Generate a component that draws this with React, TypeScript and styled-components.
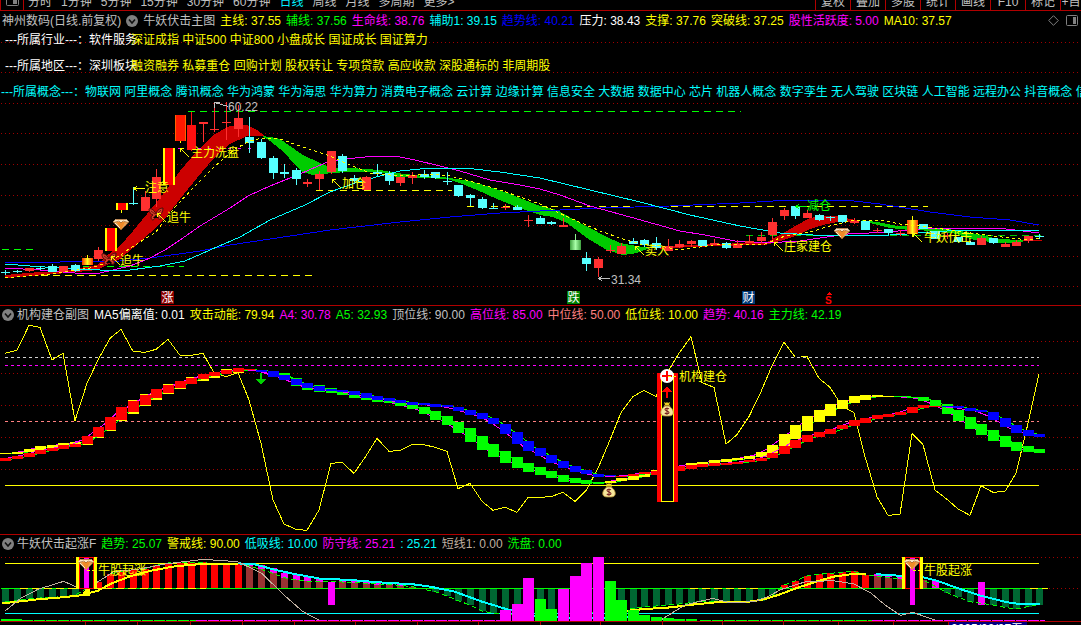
import React from "react";
import styled, { createGlobalStyle } from "styled-components";

const GlobalStyle = createGlobalStyle`
  * { box-sizing: border-box; }
  body {
    margin: 0;
    background: #000;
    color: #c0c0c0;
    font: 12px/16px "Liberation Sans", "Noto Sans CJK SC", sans-serif;
  }
`;

const RULE = "#b00000";

const Page = styled.main`
  display: flex;
  flex-direction: column;
  min-height: 100vh;
  overflow: hidden;
  background: #000;
`;

const Toolbar = styled.nav`
  display: flex;
  align-items: flex-end;
  height: 11px;
  overflow: hidden;
  border-bottom: 1px solid ${RULE};
  border-left: 1px solid ${RULE};
`;

const LayoutButton = styled.button`
  display: flex;
  align-items: flex-end;
  justify-content: center;
  width: 23px;
  height: 16px;
  padding: 0 0 4px;
  border: 0;
  border-right: 1px solid ${RULE};
  background: #000;
`;

const Periods = styled.div`
  display: flex;
  gap: 9px;
  padding-left: 4px;
`;

const PeriodButton = styled.button<{ $active?: boolean }>`
  padding: 0;
  border: 0;
  background: none;
  font: inherit;
  white-space: nowrap;
  color: ${(p) => (p.$active ? "#00f0ff" : "#c0c0c0")};
`;

const Tools = styled.div`
  display: flex;
  margin-left: auto;
`;

const ToolButton = styled.button<{ $last?: boolean }>`
  width: ${(p) => (p.$last ? 21 : 35)}px;
  padding: 0;
  border: 0;
  border-left: 1px solid ${RULE};
  background: none;
  color: #c0c0c0;
  font: inherit;
  white-space: nowrap;
`;

const Panel = styled.section<{ $ruled?: boolean }>`
  border-top: ${(p) => (p.$ruled ? `1px solid ${RULE}` : "0")};
`;

const Header = styled.header<{ $tall?: boolean }>`
  display: flex;
  align-items: center;
  gap: 5px;
  height: ${(p) => (p.$tall ? 18 : 16)}px;
  padding: ${(p) => (p.$tall ? 1 : 2)}px 3px 0 2px;
  white-space: nowrap;
`;

const Title = styled.h2<{ $wide?: boolean }>`
  display: flex;
  align-items: center;
  gap: ${(p) => (p.$wide ? 5 : 3)}px;
  margin: 0;
  font: inherit;
  color: #c0c0c0;
`;

const Collapse = styled.button`
  display: flex;
  padding: 0;
  border: 0;
  background: none;
`;

const Reading = styled.span<{ $color: string }>`
  color: ${(p) => p.$color};
`;

const HeaderTools = styled.div`
  display: flex;
  align-items: center;
  gap: 7px;
  margin-left: auto;
`;

const IconButton = styled.button`
  display: flex;
  padding: 0;
  border: 0;
  background: none;
`;

const Stack = styled.div`
  display: grid;
  overflow: hidden;
  > * {
    grid-area: 1 / 1;
    min-width: 0;
  }
`;

const Chart = styled.svg`
  display: block;
  width: 100%;
  height: auto;
  shape-rendering: crispEdges;
  text {
    font: 12px "Liberation Sans", "Noto Sans CJK SC", sans-serif;
  }
`;

const Notes = styled.div`
  display: flex;
  flex-direction: column;
  gap: 6px;
  padding-top: 1px;
`;

const Note = styled.p<{ $indent: number; $color: string }>`
  display: flex;
  margin: 0;
  padding-left: ${(p) => p.$indent}px;
  line-height: 20px;
  white-space: nowrap;
  color: ${(p) => p.$color};
`;

const NoteLead = styled.span`
  width: 126px;
  flex: none;
`;

const NoteLinks = styled.span`
  color: #ffff00;
`;

/* ---------- shared chart helpers ---------- */

const W = 1081;
const barX = (i: number) => Math.round(5.3 + 11.62 * i);

type Pt = [number, number];
const pts = (list: Pt[]) => list.map((p) => p.join(",")).join(" ");

const Dotted = ({ ys }: { ys: number[] }) => (
  <>
    {ys.map((y) => (
      <path key={y} d={`M1 ${y}.5H${W}`} stroke="#a00000" strokeDasharray="1 3" />
    ))}
  </>
);

const HDash = ({ y, x1, x2, color, dash = "7 5" }: { y: number; x1: number; x2: number; color: string; dash?: string }) => (
  <path d={`M${x1} ${y}.5H${x2}`} stroke={color} strokeDasharray={dash} />
);

const Line = ({ p, c, w = 1, dash }: { p: Pt[]; c: string; w?: number; dash?: string }) => (
  <polyline points={pts(p)} fill="none" stroke={c} strokeWidth={w} strokeDasharray={dash} />
);

const Pointer = ({ x, y, color = "#ffff00" }: { x: number; y: number; color?: string }) => (
  <path d={`M${x} ${y}l9 9M${x} ${y}h4M${x} ${y}v4`} stroke={color} fill="none" />
);

const LeftArrow = ({ x, y, color, len = 11 }: { x: number; y: number; color: string; len?: number }) => (
  <path d={`M${x} ${y}.5h${len}M${x + 3} ${y - 2}l-3 2.5l3 2.5`} stroke={color} fill="none" />
);

const Gem = ({ x, y }: { x: number; y: number }) => (
  <g transform={`translate(${x} ${y})`} shapeRendering="geometricPrecision">
    <path d="M-5-5H5L8-2L0 6L-8-2Z" fill="#e9a356" />
    <path d="M-5-5H5L8-2H-8Z" fill="#ffe8c4" />
    <path d="M-4-2H4L0 6Z" fill="#f08a28" />
    <path d="M-5-4.5H5M-7-1.5L-2-3L0-1L2-3L7-1.5" stroke="#a86a32" strokeWidth=".8" fill="none" />
    <path d="M-6-1L-1 4" stroke="#fff3dc" strokeWidth=".9" />
  </g>
);

const Butterfly = ({ x, y }: { x: number; y: number }) => (
  <g transform={`translate(${x} ${y})`} shapeRendering="geometricPrecision">
    <path d="M0 0C-2-5-6-6-7-5C-7-1-5 0-3 1C-6 2-5 6-3 6C-1 5 0 3 0 1C1 4 3 6 5 5C6 2 4 1 3 1C6 0 7-3 7-6C4-6 1-4 0 0Z" fill="#d03a28" stroke="#4a0d08" />
    <path d="M-5-3L-1 0M5-4L1 0M-3 4L0 1L3 4" stroke="#5a1008" strokeWidth=".8" />
  </g>
);

const MoneyBag = ({ x, y }: { x: number; y: number }) => (
  <g transform={`translate(${x} ${y})`} shapeRendering="geometricPrecision">
    <path d="M-3-8L-1-7L0-8L1-7L3-8L2-5H-2Z" fill="#e8d020" />
    <path d="M-2-4H2C5-2 7 1 6 4C5 6 3 6 0 6S-5 6-6 4C-7 1-5-2-2-4Z" fill="#f6e69a" stroke="#b08a30" strokeWidth=".8" />
    <path d="M-3-4.5H3" stroke="#a08020" />
    <path d="M2-1.2C1-2-2-2-2-.4S2 .8 2 2.5S-1 4-2.2 3M0-2.6V4.8" stroke="#7a2222" strokeWidth="1.1" fill="none" />
  </g>
);

const Tag = ({ x, y, bg, children }: { x: number; y: number; bg: string; children: string }) => (
  <g>
    <rect x={x} y={y} width="13" height="13" fill={bg} />
    <text x={x + 0.5} y={y + 11} fill="#fff">{children}</text>
  </g>
);

/* ---------- panel 1: candles ---------- */

// kind, body top, body bottom, wick top, wick bottom
type Candle = [string, number, number, number, number];
const CANDLES: Candle[] = [
  ["c", 272, 273, 270, 275], ["c", 271, 272, 270, 273], ["r", 268, 271, 268, 272], ["c", 268, 269, 266, 270],
  ["c", 266, 272, 264, 272], ["r", 266, 272, 266, 272], ["c", 265, 271, 264, 272], ["o", 258, 265, 255, 265],
  ["r", 250, 259, 247, 261], ["y", 228, 251, 228, 251], ["y", 203, 210, 203, 213], ["c", 203, 204, 187, 205],
  ["r", 197, 211, 191, 211], ["r", 177, 199, 169, 207], ["y", 148, 185, 148, 185], ["h", 115, 141, 115, 143],
  ["r", 125, 150, 112, 151], ["r", 122, 124, 122, 142], ["r", 129, 130, 102, 132], ["r", 122, 123, 102, 140],
  ["r", 118, 129, 105, 137], ["c", 137, 143, 117, 153], ["c", 142, 158, 139, 159], ["c", 158, 173, 156, 179],
  ["c", 172, 174, 164, 178], ["c", 170, 179, 168, 185], ["r", 182, 184, 179, 187], ["r", 174, 179, 171, 190],
  ["r", 151, 172, 151, 174], ["c", 156, 171, 154, 173], ["c", 178, 181, 175, 184], ["r", 177, 190, 176, 190],
  ["c", 172, 174, 164, 176], ["c", 173, 181, 171, 185], ["r", 177, 183, 174, 186], ["r", 175, 178, 172, 184],
  ["c", 174, 177, 170, 179], ["c", 172, 178, 172, 179], ["c", 181, 182, 172, 185], ["c", 185, 196, 185, 197],
  ["c", 195, 198, 194, 206], ["c", 199, 208, 197, 209], ["c", 208, 209, 203, 209], ["r", 207, 208, 204, 210],
  ["c", 207, 210, 205, 210], ["r", 220, 221, 215, 227], ["c", 218, 224, 216, 224], ["c", 222, 224, 221, 225],
  ["r", 225, 227, 218, 227], ["g", 240, 250, 234, 250], ["c", 258, 264, 252, 271], ["r", 259, 268, 257, 277],
  ["r", 250, 251, 245, 253], ["r", 246, 254, 243, 254], ["c", 241, 244, 238, 244], ["c", 240, 245, 239, 247],
  ["c", 243, 248, 237, 250], ["r", 246, 251, 239, 251], ["r", 244, 247, 240, 248], ["r", 241, 244, 240, 247],
  ["c", 240, 246, 240, 246], ["r", 243, 245, 239, 245], ["c", 243, 248, 242, 249], ["r", 244, 248, 240, 248],
  ["r", 241, 243, 235, 243], ["r", 237, 241, 232, 243], ["r", 222, 235, 218, 239], ["r", 210, 216, 208, 220],
  ["c", 206, 216, 206, 219], ["r", 213, 218, 210, 218], ["c", 215, 220, 214, 221], ["c", 217, 218, 216, 221],
  ["c", 215, 222, 215, 223], ["r", 221, 223, 218, 224], ["c", 221, 230, 221, 230], ["r", 230, 231, 228, 233],
  ["c", 229, 233, 229, 235], ["r", 233, 234, 230, 236], ["m", 220, 234, 216, 237], ["c", 224, 229, 224, 229],
  ["c", 231, 239, 231, 239], ["r", 235, 236, 233, 239], ["c", 237, 242, 237, 243], ["c", 242, 245, 241, 245],
  ["r", 238, 245, 236, 245], ["c", 238, 243, 238, 244], ["r", 244, 247, 242, 247], ["r", 242, 246, 240, 246],
  ["r", 236, 241, 236, 243], ["c", 236, 237, 234, 239],
];

const Candles = () => (
  <>
    {CANDLES.map(([k, t, b, hi, lo], i) => {
      const x = barX(i);
      const wide = k === "y" || k === "o" || k === "h" || k === "m" || k === "g";
      const color = k === "c" ? "#55ffff" : k === "g" ? "#8df08d" : k === "r" ? (i === 16 ? "#ff1010" : "#ff3030") : "#ffff00";
      const fill: Record<string, string> = { y: "#ff0000", o: "url(#amber)", h: "#ff1800", m: "url(#amber)", g: "url(#mint)" };
      return (
        <g key={i}>
          <rect x={x} y={hi} width="1" height={lo - hi} fill={color} />
          {wide ? (
            <rect x={x - 5} y={t} width="11" height={b - t} fill={fill[k]} />
          ) : (
            <rect x={x - 4} y={t} width="9" height={b - t} fill={color} />
          )}
          {(k === "y" || k === "h") && (
            <path d={`M${x - 4.5} ${t}V${b}M${x + 5.5} ${t}V${b}`} stroke={k === "y" ? "#ffff00" : "#ff6000"} strokeWidth={k === "y" ? 2 : 1} />
          )}
        </g>
      );
    })}
  </>
);

const RED_RISE: Pt[] = [[5, 275], [40, 272], [70, 270], [97, 265], [109, 254], [120, 246], [133, 231], [147, 214], [160, 198], [180, 171], [197, 151], [213, 135], [230, 126], [247, 125], [257, 130], [265, 136], [247, 136], [230, 144], [213, 159], [197, 178], [180, 199], [167, 216], [150, 233], [133, 248], [120, 259], [109, 264], [97, 270], [67, 273], [33, 276], [5, 278]];
const GREEN_FALL: Pt[] = [[262, 136], [270, 137], [280, 139], [290, 146], [303, 155], [320, 163], [333, 168], [350, 168], [380, 170], [397, 173], [423, 176], [443, 177], [470, 181], [490, 187], [510, 194], [540, 206], [557, 210], [573, 219], [590, 228], [607, 237], [620, 243], [637, 246], [650, 248], [637, 253], [623, 255], [607, 250], [587, 238], [567, 223], [553, 217], [540, 215], [517, 207], [497, 199], [477, 190], [460, 183], [447, 179], [423, 178], [397, 177], [380, 172], [347, 172], [333, 173], [313, 175], [303, 172], [293, 163], [285, 153], [270, 141]];
const RED_SECOND: Pt[] = [[660, 247], [690, 245], [720, 244], [767, 242], [780, 235], [797, 225], [810, 218], [823, 216], [840, 216], [850, 219], [862, 221], [837, 222], [823, 225], [810, 229], [793, 237], [780, 241], [765, 245], [720, 246], [690, 247], [660, 249]];
const GREEN_LAST: Pt[] = [[860, 220], [877, 222], [897, 226], [917, 227], [943, 228], [960, 231], [983, 235], [997, 239], [1023, 240], [1023, 242], [1003, 243], [990, 242], [970, 239], [957, 234], [937, 231], [910, 230], [890, 228], [870, 223]];
const MAGENTA_MA: Pt[] = [[5, 268], [40, 270], [75, 273], [100, 273], [130, 266], [150, 258], [165, 250], [180, 240], [200, 226], [230, 208], [248, 196], [270, 186], [300, 174], [325, 163], [345, 159], [375, 156], [395, 156], [415, 160], [440, 166], [460, 171], [490, 180], [520, 185], [540, 189], [560, 195], [590, 206], [630, 217], [680, 231], [705, 235], [735, 241], [765, 243], [800, 241], [820, 238], [848, 234], [890, 232], [907, 230], [933, 228], [998, 228], [1023, 231], [1039, 233]];
const CYAN_MA: Pt[] = [[5, 264], [30, 266], [60, 268], [100, 270], [130, 270], [160, 266], [185, 261], [210, 250], [240, 237], [270, 220], [305, 205], [330, 192], [355, 183], [380, 176], [400, 171], [430, 168], [465, 168], [500, 172], [540, 178], [590, 190], [640, 202], [690, 215], [740, 226], [780, 233], [830, 236], [890, 235], [907, 234], [930, 232], [965, 230], [1039, 230]];
const BLUE_MA: Pt[] = [[5, 262], [60, 262], [120, 261], [150, 258], [200, 251], [230, 245], [270, 239], [330, 230], [400, 222], [450, 217], [500, 213], [540, 211], [600, 208], [670, 206], [740, 203], [790, 200], [845, 200], [880, 204], [930, 212], [970, 217], [1010, 220], [1039, 225]];
const YELLOW_MA: Pt[] = [[5, 278], [50, 274], [90, 268], [110, 262], [135, 245], [155, 233], [175, 207], [195, 186], [215, 166], [235, 149], [250, 141], [262, 138], [280, 139], [300, 146], [330, 156], [350, 165], [370, 173], [400, 176], [430, 174], [450, 176], [470, 181], [500, 190], [540, 204], [570, 218], [600, 231], [620, 238], [640, 244], [660, 246], [680, 250], [700, 247], [720, 244], [765, 244], [785, 236], [810, 232], [830, 226], [850, 221], [880, 220], [900, 224], [920, 226], [950, 230], [985, 235], [1010, 238], [1030, 240], [1039, 238]];

const MainChart = () => (
  <Chart viewBox="0 29 1081 276" role="img" aria-label="牛妖伏击主图">
    <defs>
      <linearGradient id="amber">
        <stop offset="0" stopColor="#ff3000" />
        <stop offset=".5" stopColor="#ffff20" />
        <stop offset="1" stopColor="#ff3000" />
      </linearGradient>
      <linearGradient id="mint">
        <stop offset="0" stopColor="#3ea03e" />
        <stop offset=".5" stopColor="#a8ffa8" />
        <stop offset="1" stopColor="#3ea03e" />
      </linearGradient>
    </defs>
    <Dotted ys={[42, 72, 103, 133, 164, 195, 225, 256, 286]} />
    <HDash y={111} x1={188} x2={741} color="#00ff00" />
    <HDash y={249} x1={2} x2={33} color="#00ff00" />
    <HDash y={266} x1={83} x2={184} color="#00ff00" />
    <HDash y={235} x1={746} x2={1043} color="#00c800" />
    <HDash y={275} x1={5} x2={312} color="#ffff00" />
    <HDash y={190} x1={316} x2={452} color="#ffff00" />
    <HDash y={206} x1={467} x2={928} color="#ffff00" />
    <polygon points={pts(RED_RISE)} fill="#cc0000" />
    <polygon points={pts(GREEN_FALL)} fill="#00cc00" />
    <polygon points={pts(RED_SECOND)} fill="#cc0000" />
    <polygon points={pts(GREEN_LAST)} fill="#00cc00" />
    <path d="M1023 240.5H1042" stroke="#cc0000" />
    <HDash y={148} x1={178} x2={252} color="#ff00ff" dash="3 7" />
    <Line p={BLUE_MA} c="#0000ff" />
    <Line p={MAGENTA_MA} c="#ff00ff" />
    <Line p={CYAN_MA} c="#00ffff" />
    <Candles />
    <Line p={YELLOW_MA} c="#ffff00" dash="3 3" />
    <Butterfly x={156} y={214} />
    <Butterfly x={109} y={259} />
    <Gem x={121} y={224} />
    <Gem x={842} y={233} />

    <LeftArrow x={134} y={188} color="#ffff00" />
    <text x="145" y="192" fill="#ffff00">注意</text>
    <Pointer x={180} y={148} />
    <text x="191" y="157" fill="#ffff00">主力洗盘</text>
    <Pointer x={157} y={213} />
    <text x="167" y="222" fill="#ffff00">追牛</text>
    <Pointer x={111} y={256} />
    <text x="120" y="265" fill="#ffff00">追牛</text>
    <Pointer x={332} y={179} />
    <text x="342" y="188" fill="#ffff00">加仓</text>
    <path d="M214.5 102.5l14 4M214.5 102.5h5M214.5 102.5v5" stroke="#c0c0c0" fill="none" />
    <text x="228" y="111" fill="#c0c0c0">60.22</text>
    <LeftArrow x={599} y={278} color="#c0c0c0" />
    <text x="611" y="284" fill="#c0c0c0">31.34</text>
    <Pointer x={635} y={246} />
    <text x="645" y="255" fill="#ffff00">卖入</text>
    <Pointer x={774} y={242} />
    <text x="784" y="251" fill="#ffff00">庄家建仓</text>
    <LeftArrow x={796} y={206} color="#00ff00" />
    <text x="807" y="210" fill="#00ff00">减仓</text>
    <Pointer x={913} y={233} />
    <text x="924" y="242" fill="#ffff00">牛妖伏击</text>

    <Tag x={161} y={291} bg="#8b0000">涨</Tag>
    <Tag x={567} y={291} bg="#008000">跌</Tag>
    <Tag x={742} y={291} bg="#003a78">财</Tag>
    <path d="M826 295L829 292L832 295Z" fill="#ff0000" />
    <text x="825" y="304" fill="#ff0000" style={{ fontSize: 10, fontWeight: 700 }}>S</text>
  </Chart>
);

/* ---------- panel 2: block bands ---------- */

const unit = (v: number) => 300 + v / 3;

const OSC = [160, 151, 76, 82, 180, 160, 362, 250, 180, 115, 88, 154, 157, 148, 118, 166, 166, 160, 218, 230, 218, 300, 430, 600, 672, 688, 691, 630, 490, 487, 520, 468, 415, 454, 451, 434, 434, 442, 454, 566, 550, 604, 631, 622, 637, 592, 592, 590, 577, 604, 572, 505, 420, 338, 290, 271, 290, 215, 160, 110, 248, 262, 432, 404, 350, 275, 197, 127, 170, 170, 235, 262, 318, 338, 470, 590, 646, 643, 401, 434, 570, 598, 627, 646, 557, 577, 574, 520, 370, 222];

type Span = [number, number];
// Slow band: red while rising, blue while falling.
const SLOW: Span[] = [
  [474, 482], [468, 476], [458, 471], [450, 461], [444, 453], [436, 447], [431, 440], [409, 432], [382, 413], [352, 390],
  [322, 360], [302, 335], [284, 313], [267, 295], [254, 278], [243, 263], [233, 250], [223, 238], [216, 229], [209, 222],
  [204, 217], [208, 211], [209, 214], [214, 231], [224, 240], [237, 255], [250, 265], [258, 272], [267, 274], [270, 276],
  [273, 285], [279, 293], [289, 300], [295, 303], [300, 309], [305, 314], [309, 316], [312, 320], [316, 323], [320, 333],
  [330, 344], [338, 357], [353, 371], [371, 402], [395, 430], [424, 454], [445, 470], [465, 488], [484, 504], [497, 515],
  [511, 524], [522, 530], [526, 530], [527, 531], [522, 528], [517, 524], [512, 524], [506, 516], [498, 512], [494, 507],
  [492, 501], [489, 497], [488, 494], [485, 491], [481, 488], [474, 483], [460, 474], [437, 461], [419, 443], [404, 426],
  [396, 410], [388, 402], [376, 389], [360, 377], [354, 369], [346, 357], [342, 350], [336, 345], [321, 338], [316, 326],
  [318, 321], [319, 322], [319, 325], [324, 333], [331, 336], [336, 360], [354, 381], [376, 399], [390, 408], [402, 412],
];
// Fast band: yellow while rising, green while falling.
const FAST: Span[] = [
  [460, 464], [457, 462], [448, 458], [438, 450], [436, 446], [430, 438], [427, 433], [408, 434], [380, 414], [350, 392],
  [320, 362], [300, 342], [282, 317], [266, 299], [253, 282], [242, 267], [232, 254], [222, 242], [215, 233], [208, 223],
  [204, 219], [207, 212], [209, 214], [212, 228], [220, 236], [233, 258], [248, 270], [256, 277], [264, 278], [272, 284],
  [276, 293], [284, 300], [290, 305], [299, 309], [304, 318], [313, 327], [320, 342], [333, 360], [347, 375], [366, 398],
  [384, 425], [407, 449], [432, 471], [453, 489], [471, 504], [488, 516], [501, 525], [513, 535], [524, 544], [535, 549],
  [541, 552], [545, 550], [544, 550], [535, 545], [528, 540], [519, 532], [511, 524], [504, 514], [497, 505], [490, 499],
  [486, 495], [480, 491], [478, 486], [475, 482], [468, 476], [457, 471], [436, 459], [402, 438], [375, 418], [348, 392],
  [330, 366], [311, 347], [300, 326], [289, 311], [285, 300], [286, 293], [288, 291], [289, 292], [290, 293], [291, 302],
  [299, 320], [312, 342], [329, 362], [350, 387], [371, 405], [390, 422], [407, 440], [426, 453], [439, 457], [447, 459],
];

const slowColor = (i: number) => (i < 22 || (i > 52 && i < 81) ? "#ff0000" : "#0000ff");
const fastColor = (i: number) => (i < 22 || (i > 51 && i < 77) ? "#ffff00" : "#00ff00");

const Band = ({ data, color }: { data: Span[]; color: (i: number) => string }) => {
  const trail = (dx: number): Pt[] => data.map(([t, b], i) => [barX(i) + dx, unit((t + b) / 2)]);
  return (
    <>
      <Line p={trail(-5)} c="#ff00ff" />
      <Line p={trail(5)} c="#00ff00" />
      {data.map(([t, b], i) => (
        <rect key={i} x={barX(i) - 5} y={Math.round(unit(t))} width="11" height={Math.max(1, Math.round((b - t) / 3))} fill={color(i)} />
      ))}
    </>
  );
};

const BandChart = () => (
  <Chart viewBox="0 322 1081 212" role="img" aria-label="机构建仓副图">
    <Dotted ys={[341, 373, 405, 437, 469]} />
    <HDash y={357} x1={5} x2={1039} color="#d0d0d0" dash="3 3" />
    <HDash y={365} x1={5} x2={1039} color="#ff00ff" dash="3 3" />
    <HDash y={421} x1={5} x2={1039} color="#ff8080" dash="3 3" />
    <path d="M5 485.5H1039" stroke="#ffff00" />
    <Line p={OSC.slice(0, 69).map((v, i): Pt => [barX(i), unit(v)])} c="#ffff00" />
    <Line p={OSC.slice(69).map((v, i): Pt => [barX(i + 69), unit(v)])} c="#ffff00" />
    <path d="M801 356.5H808" stroke="#ffff00" />
    <Band data={FAST} color={fastColor} />
    <Band data={SLOW} color={slowColor} />

    <rect x="657" y="373" width="21" height="129" fill="#ff0000" />
    <rect x="661.5" y="373.5" width="12" height="128" fill="#000" stroke="#ffff00" />
    <circle cx="667" cy="376" r="7" fill="#fff" shapeRendering="geometricPrecision" />
    <path d="M662 376H672M667 371V381" stroke="#ff0000" strokeWidth="2" />
    <path d="M667 386L672 392H662ZM666 392H668V398H666Z" fill="#ff0000" />
    <MoneyBag x={667} y={410} />
    <MoneyBag x={609} y={491} />
    <path d="M261 385L256 379H266ZM260 373H262V380H260Z" fill="#00d000" />
    <path d="M668 376.5H678" stroke="#ffff00" strokeDasharray="3 2" />
    <text x="679" y="381" fill="#ffff00">机构建仓</text>
  </Chart>
);

/* ---------- panel 3: histogram ---------- */

const lo = (v: number) => 530 + v / 3;
const ZERO = 588;

// bar index, colour key, edge of the bar away from the zero line
const HIST: [number, string, number][] = [
  [0, "g", 216], [1, "g", 212], [2, "g", 206], [3, "g", 204], [4, "g", 202], [5, "g", 200], [6, "g", 196],
  [8, "r", 155], [9, "r", 133], [10, "r", 124], [11, "r", 120], [12, "r", 116], [13, "r", 106], [14, "r", 99],
  [15, "r", 98], [16, "r", 97], [17, "r", 97], [18, "r", 103], [19, "r", 103], [20, "r", 101],
  [21, "b", 108], [22, "b", 118], [23, "b", 130], [24, "b", 143], [25, "b", 150], [26, "b", 154], [27, "b", 155],
  [29, "b", 156], [30, "b", 158], [31, "b", 160], [32, "b", 162], [33, "b", 163], [34, "b", 166], [35, "b", 170],
  [37, "g", 185], [38, "g", 198], [39, "g", 212], [40, "g", 225], [41, "g", 243], [42, "g", 250], [43, "g", 252],
  [44, "g", 256], [45, "g", 258], [46, "g", 258], [47, "g", 256], [53, "g", 240], [54, "g", 236], [55, "g", 230],
  [56, "g", 228], [57, "g", 225], [58, "g", 222], [59, "g", 218], [60, "g", 214], [61, "g", 216], [62, "g", 216],
  [63, "g", 216], [64, "g", 215], [65, "g", 212], [66, "g", 196], [67, "r", 165], [68, "r", 153], [69, "r", 138],
  [70, "r", 133], [71, "r", 130], [72, "r", 127], [73, "r", 124], [74, "r", 135], [75, "b", 138], [76, "b", 143],
  [77, "b", 147], [79, "b", 150], [81, "g", 188], [82, "g", 202], [83, "g", 215], [85, "g", 225], [86, "g", 232],
  [87, "g", 237], [88, "g", 230], [89, "g", 224],
];
const HIST_COLORS: Record<string, string> = { g: "#006633", r: "#ff0000", b: "#993333" };

// bar index, top, bottom
const CAPS: [number, number, number][] = [
  [21, 100, 108], [22, 106, 118], [23, 115, 130], [24, 128, 143], [25, 136, 150], [26, 142, 154], [27, 147, 155],
  [28, 155, 224], [29, 150, 156], [30, 153, 158], [31, 156, 161], [32, 158, 163], [33, 160, 165], [34, 163, 168],
  [75, 132, 138], [76, 136, 143], [77, 138, 147], [80, 150, 173], [84, 156, 224],
];

// bar index, colour, top
const VOLUME: [number, string, number][] = [
  [43, "#ff00ff", 240], [44, "#ff00ff", 222], [45, "#ff00ff", 144], [46, "#00ff00", 207], [47, "#00ff00", 237],
  [48, "#ff00ff", 177], [49, "#ff00ff", 137], [50, "#ff00ff", 100], [51, "#ff00ff", 82], [52, "#00ff00", 153],
  [53, "#00ff00", 210], [54, "#00ff00", 240], [55, "#00ff00", 255], [56, "#00ff00", 261], [57, "#00ff00", 263],
  [58, "#00ff00", 267], [59, "#00ff00", 267],
];

const scaleLeft = (list: Pt[]): Pt[] => list.map(([x, y]) => [x / 2.904, lo(y)]);
const scaleRight = (list: Pt[]): Pt[] => list.map(([x, y]) => [540 + x / 2.898, lo(y)]);

const YELLOW_A = scaleLeft([[6, 220], [60, 214], [110, 208], [180, 202], [235, 196], [285, 182], [320, 162], [380, 138], [440, 122], [500, 110], [560, 104], [620, 101], [690, 101]]);
const YELLOW_B = scaleRight([[200, 254], [270, 240], [320, 236], [380, 232], [440, 224], [510, 217], [600, 216], [650, 208], [690, 195], [750, 172], [800, 155], [850, 140], [900, 133], [945, 133]]);
const CYAN_A = scaleLeft([[690, 100], [740, 103], [800, 120], [860, 133], [930, 146], [1020, 150], [1100, 157], [1200, 163], [1250, 170], [1320, 185], [1400, 215], [1470, 237], [1560, 260], [1700, 264], [1850, 262]]);
const CYAN_B = scaleRight([[975, 133], [1000, 134], [1050, 138], [1110, 142], [1150, 152], [1220, 178], [1280, 198], [1350, 216], [1390, 222], [1448, 222]]);
const BEIGE_A = scaleLeft([[16, 242], [60, 205], [110, 178], [185, 154], [220, 170], [250, 178], [285, 155], [330, 125], [400, 118], [480, 102], [590, 88], [690, 95], [760, 130], [830, 200], [880, 245], [925, 270]]);
const BEIGE_B = scaleRight([[350, 270], [420, 225], [500, 205], [550, 218], [620, 215], [660, 200], [700, 178], [770, 155], [850, 152], [910, 162], [960, 190], [1000, 225], [1045, 256], [1080, 247], [1145, 270]]);
const TREND: Pt[] = HIST.map(([i, , v]) => [barX(i), lo(v)]);

const SignalBox = ({ x, tail }: { x: number; tail: number }) => (
  <g>
    <rect x={x} y="557" width="21" height="32" fill="#ffff00" />
    <rect x={x + 3} y="557" width="15" height="32" fill="#ff0000" />
    <rect x={x + 4} y="558" width="13" height="30" fill="#000" />
    <rect x={x + 8} y="558" width="5" height={tail - 558} fill="#ff00ff" />
  </g>
);

const HistChart = () => (
  <Chart viewBox="0 551 1081 74" role="img" aria-label="牛妖伏击起涨">
    <Dotted ys={[557, 588]} />
    <path d="M5 563.5H1039" stroke="#ffff00" />
    <path d="M5 613.5H1039" stroke="#00ffff" />
    {HIST.map(([i, k, v]) => {
      const y = Math.round(lo(v));
      return <rect key={i} x={barX(i) - 3} y={Math.min(y, ZERO)} width="7" height={Math.abs(y - ZERO)} fill={HIST_COLORS[k]} />;
    })}
    <path d="M1 588.5H1044" stroke="#00ff00" />
    <path d="M20 588.5H206M690 588.5H760M1030 588.5H1048" stroke="#ffff00" strokeDasharray="8 4" />
    {CAPS.map(([i, t, b]) => (
      <rect key={i} x={barX(i) - 3} y={Math.round(lo(t))} width="7" height={Math.round((b - t) / 3)} fill="#ff00ff" />
    ))}
    <Line p={TREND} c="#ff0000" dash="3 5" />
    <Line p={TREND} c="#00ff00" dash="5 3" />
    <Line p={YELLOW_A} c="#ffff00" w={2} />
    <Line p={YELLOW_B} c="#ffff00" w={2} />
    <Line p={CYAN_A} c="#00ffff" w={2} />
    <Line p={CYAN_B} c="#00ffff" w={2} />
    <Line p={BEIGE_A} c="#c0b0a0" />
    <Line p={BEIGE_B} c="#c0b0a0" />
    {VOLUME.map(([i, c, v]) => (
      <rect key={i} x={barX(i) - 5} y={Math.round(lo(v))} width="11" height={621 - Math.round(lo(v))} fill={c} />
    ))}
    <path d="M1 620H22" stroke="#00ff00" strokeWidth="2" />
    <path d="M22 620.5H196M700 620.5H872" stroke="#00ff00" strokeDasharray="11 1" />
    <path d="M196 620.5H500M872 620.5H1045" stroke="#ff00ff" strokeDasharray="11 1" />

    <SignalBox x={76} tail={588} />
    <path d="M83 592L87 589H90V596H83Z" fill="#ffff00" />
    <SignalBox x={902} tail={605} />
    <Gem x={86} y={564} />
    <Gem x={912} y={564} />
    <path d="M87 570.5H97M913 570.5H923" stroke="#ffff00" strokeDasharray="3 2" />
    <text x="98" y="575" fill="#ffff00">牛股起涨</text>
    <text x="924" y="575" fill="#ffff00">牛股起涨</text>

    <path d="M0 621.5H1081" stroke={RULE} />
    {[85, 137, 190, 242, 294, 355, 417, 478, 540, 600, 662, 722, 783, 838, 893, 948].map((x) => (
      <path key={x} d={`M${x}.5 622V625`} stroke={RULE} />
    ))}
    <rect x="949" y="622" width="78" height="3" fill="#000080" />
    <text x="951" y="633" fill="#fff">2025/02/07五</text>
  </Chart>
);

/* ---------- headers ---------- */

const CollapseButton = () => (
  <Collapse type="button" aria-label="折叠">
    <svg width="12" height="12" viewBox="0 0 12 12">
      <circle cx="6" cy="6" r="6" fill="#808080" />
      <path d="M3 4.5L6 8L9 4.5" stroke="#111" strokeWidth="1.6" fill="none" />
    </svg>
  </Collapse>
);

type Item = [string, string];
const Readings = ({ items }: { items: Item[] }) => (
  <>
    {items.map(([text, color]) => (
      <Reading key={text} $color={color}>{text}</Reading>
    ))}
  </>
);

const MAIN_ITEMS: Item[] = [
  ["主线: 37.55", "#ffff00"], ["辅线: 37.56", "#00ff00"], ["生命线: 38.76", "#ff00ff"], ["辅助1: 39.15", "#00ffff"],
  ["趋势线: 40.21", "#0000ff"], ["压力: 38.43", "#ffffff"], ["支撑: 37.76", "#ffff00"], ["突破线: 37.25", "#ffff00"],
  ["股性活跃度: 5.00", "#ff00ff"], ["MA10: 37.57", "#ffff00"],
];
const BAND_ITEMS: Item[] = [
  ["MA5偏离值: 0.01", "#ffffff"], ["攻击动能: 79.94", "#ffff00"], ["A4: 30.78", "#ff00ff"], ["A5: 32.93", "#00ff00"],
  ["顶位线: 90.00", "#c0c0c0"], ["高位线: 85.00", "#ff00ff"], ["中位线: 50.00", "#ff8080"], ["低位线: 10.00", "#ffff00"],
  ["趋势: 40.16", "#ff00ff"], ["主力线: 42.19", "#00ff00"],
];
const HIST_ITEMS: Item[] = [
  ["趋势: 25.07", "#00ff00"], ["警戒线: 90.00", "#ffff00"], ["低吸线: 10.00", "#00ffff"], ["防守线: 25.21", "#ff00ff"],
  [": 25.21", "#00ffff"], ["短线1: 0.00", "#c0b0a0"], ["洗盘: 0.00", "#00ff00"],
];

const PERIODS = ["分时", "1分钟", "5分钟", "15分钟", "30分钟", "60分钟", "日线", "周线", "月线", "多周期", "更多>"];
const TOOLS = ["复权", "叠加", "多股", "统计", "画线", "F10", "标记", "+自"];

export default function App() {
  return (
    <Page>
      <GlobalStyle />
      <Toolbar>
        <LayoutButton type="button" aria-label="布局">
          <svg width="13" height="11" viewBox="0 0 13 11">
            <rect x=".5" y=".5" width="12" height="10" rx="1" fill="none" stroke="#808080" />
            <rect x="7" y="2" width="4" height="7" fill="#808080" />
          </svg>
        </LayoutButton>
        <Periods>
          {PERIODS.map((p) => (
            <PeriodButton key={p} type="button" $active={p === "日线"}>{p}</PeriodButton>
          ))}
        </Periods>
        <Tools>
          {TOOLS.map((t, i) => (
            <ToolButton key={t} type="button" $last={i === TOOLS.length - 1}>{t}</ToolButton>
          ))}
        </Tools>
      </Toolbar>

      <Panel>
        <Header $tall>
          <Title $wide>神州数码(日线.前复权) <CollapseButton /> 牛妖伏击主图</Title>
          <Readings items={MAIN_ITEMS} />
          <HeaderTools>
            <IconButton type="button" aria-label="标记点">
              <svg width="11" height="11" viewBox="0 0 11 11">
                <path d="M5.5 .7L10.3 5.5L5.5 10.3L.7 5.5Z" fill="none" stroke="#808080" />
              </svg>
            </IconButton>
            <IconButton type="button" aria-label="侧栏">
              <svg width="12" height="11" viewBox="0 0 12 11">
                <rect x=".5" y=".5" width="11" height="10" rx="1" fill="none" stroke="#808080" />
                <rect x="7" y="2" width="3" height="7" fill="#808080" />
              </svg>
            </IconButton>
          </HeaderTools>
        </Header>
        <Stack>
          <MainChart />
          <Notes>
            <Note $indent={5} $color="#ffffff">
              <NoteLead>---所属行业---：软件服务</NoteLead>
              <NoteLinks>深证成指 中证500 中证800 小盘成长 国证成长 国证算力</NoteLinks>
            </Note>
            <Note $indent={5} $color="#ffffff">
              <NoteLead>---所属地区---：深圳板块</NoteLead>
              <NoteLinks>融资融券 私募重仓 回购计划 股权转让 专项贷款 高应收款 深股通标的 非周期股</NoteLinks>
            </Note>
            <Note $indent={1} $color="#00ffff">
              ---所属概念---：物联网 阿里概念 腾讯概念 华为鸿蒙 华为海思 华为算力 消费电子概念 云计算 边缘计算 信息安全 大数据 数据中心 芯片 机器人概念 数字孪生 无人驾驶 区块链 人工智能 远程办公 抖音概念 信
            </Note>
          </Notes>
        </Stack>
      </Panel>

      <Panel $ruled>
        <Header>
          <Title><CollapseButton />机构建仓副图</Title>
          <Readings items={BAND_ITEMS} />
        </Header>
        <BandChart />
      </Panel>

      <Panel $ruled>
        <Header>
          <Title><CollapseButton />牛妖伏击起涨F</Title>
          <Readings items={HIST_ITEMS} />
        </Header>
        <HistChart />
      </Panel>
    </Page>
  );
}
